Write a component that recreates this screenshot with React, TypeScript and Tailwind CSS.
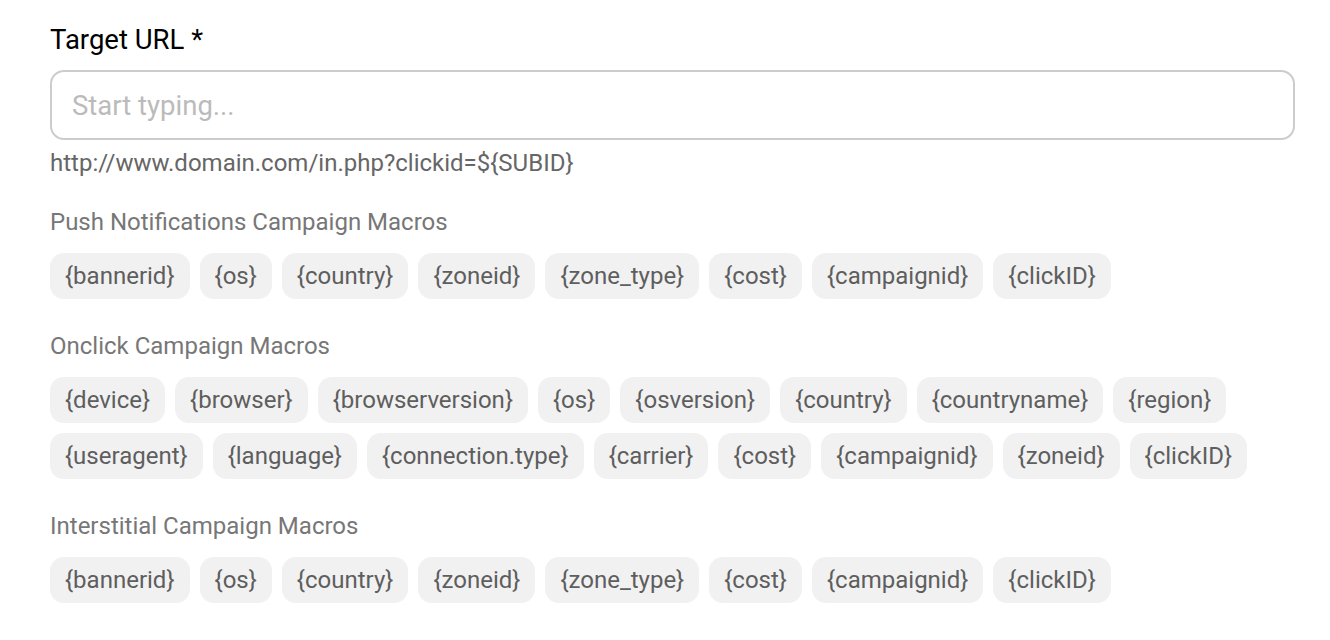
const groups = [
  {
    title: 'Push Notifications Campaign Macros',
    macros: ['{bannerid}', '{os}', '{country}', '{zoneid}', '{zone_type}', '{cost}', '{campaignid}', '{clickID}'],
  },
  {
    title: 'Onclick Campaign Macros',
    macros: [
      '{device}', '{browser}', '{browserversion}', '{os}', '{osversion}', '{country}', '{countryname}', '{region}',
      '{useragent}', '{language}', '{connection.type}', '{carrier}', '{cost}', '{campaignid}', '{zoneid}', '{clickID}',
    ],
  },
  {
    title: 'Interstitial Campaign Macros',
    macros: ['{bannerid}', '{os}', '{country}', '{zoneid}', '{zone_type}', '{cost}', '{campaignid}', '{clickID}'],
  },
]

const MacroChip = ({ label }: { label: string }) => (
  <span className="h-[46px] px-[15px] flex items-center rounded-[14px] bg-[#f1f1f1] text-[#5e5e5e] text-[24px] cursor-pointer hover:bg-[#e8e8e8]">
    {label}
  </span>
)

export default function App() {
  return (
    <div className="min-h-screen bg-white pl-[50px] pr-[35px] pt-[24px] font-['Roboto',sans-serif]">
      <label className="block text-[27.5px] leading-[32px] text-black mb-[14px]">Target URL *</label>
      <input
        type="text"
        placeholder="Start typing..."
        className="w-full h-[70px] border-2 border-[#ccc] rounded-[14px] px-[20px] text-[27.5px] text-[#333] placeholder:text-[#bbb] outline-none"
      />
      <p className="mt-[11px] text-[24px] leading-[24px] text-[#666]">http://www.domain.com/in.php?clickid=${'{SUBID}'}</p>

      {groups.map((g, i) => (
        <section key={i} className="mt-[35px]">
          <h3 className="text-[24px] leading-[24px] text-[#777]">{g.title}</h3>
          <div className="mt-[19px] flex flex-wrap gap-[10px] max-w-[1200px]">
            {g.macros.map((m, j) => (
              <MacroChip key={j} label={m} />
            ))}
          </div>
        </section>
      ))}
    </div>
  )
}
